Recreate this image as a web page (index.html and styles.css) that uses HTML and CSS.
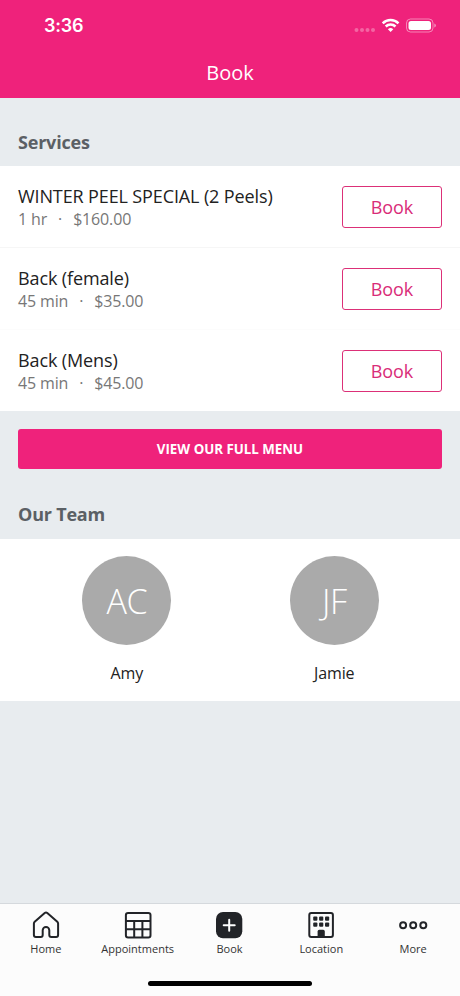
FILE: index.html
```html
<!DOCTYPE html>
<html lang="en">
<head>
<meta charset="utf-8">
<title>Book</title>
<link rel="stylesheet" href="styles.css">
</head>
<body>
<header class="header">
  <div class="status">
    <span class="time">3:36</span>
    <svg class="status-icons" width="84" height="18" viewBox="0 0 84 18">
      <g fill="#fff" opacity=".3"><circle cx="4.500" cy="13" r="2"/><circle cx="10" cy="13" r="2"/><circle cx="15.500" cy="13" r="2"/><circle cx="21" cy="13" r="2"/></g>
      <g fill="none" stroke="#fff" stroke-width="2.500"><path d="M30.700 6.300a11.200 11.200 0 0 1 15.800 0"/><path d="M33.700 9.500a7 7 0 0 1 9.800 0"/></g>
      <path d="M38.600 15l-2.700-2.800a3.900 3.900 0 0 1 5.400 0z" fill="#fff"/>
      <rect x="54.500" y="2" width="26.500" height="13" rx="4" fill="none" stroke="#fff" stroke-opacity=".45"/>
      <rect x="56.500" y="4" width="22.500" height="9" rx="2.500" fill="#fff"/>
      <path d="M82.300 6.500q1.600.5 1.600 2t-1.600 2z" fill="#fff" opacity=".5"/>
    </svg>
  </div>
  <h1 class="title">Book</h1>
</header>
<main class="content">
  <h2 class="section services-title">Services</h2>
  <ul class="services">
    <li class="service">
      <div><div class="name">WINTER PEEL SPECIAL (2 Peels)</div><div class="meta"><span>1 hr</span><span>·</span><span>$160.00</span></div></div>
      <button class="book">Book</button>
    </li>
    <li class="service">
      <div><div class="name">Back (female)</div><div class="meta"><span>45 min</span><span>·</span><span>$35.00</span></div></div>
      <button class="book">Book</button>
    </li>
    <li class="service">
      <div><div class="name">Back (Mens)</div><div class="meta"><span>45 min</span><span>·</span><span>$45.00</span></div></div>
      <button class="book">Book</button>
    </li>
  </ul>
  <button class="menu">VIEW OUR FULL MENU</button>
  <h2 class="section team-title">Our Team</h2>
  <div class="team">
    <div class="member"><div class="avatar">AC</div><div class="member-name">Amy</div></div>
    <div class="member"><div class="avatar">JF</div><div class="member-name">Jamie</div></div>
  </div>
</main>
<footer class="footer">
  <nav class="tabs">
    <a class="tab"><svg class="icon" viewBox="0 0 28 28"><path d="M1.900 12.600Q1.900 11.500 2.700 10.700L12.700 2.100Q14 1 15.300 2.100L25.300 10.700Q26.100 11.500 26.100 12.600V24Q26.100 26 24.100 26H19.300Q17.300 26 17.300 24V19.300A3.300 3.300 0 0 0 10.700 19.300V24Q10.700 26 8.700 26H3.900Q1.900 26 1.900 24Z"/></svg><span>Home</span></a>
    <a class="tab"><svg class="icon" viewBox="0 0 28 28"><rect x="1.900" y="1.900" width="24.600" height="24.600" rx="2.200"/><path d="M2 10H26.500M2 18.200H26.500M10.200 10V26.500M18.400 10V26.500"/></svg><span>Appointments</span></a>
    <a class="tab"><svg class="icon" viewBox="0 0 28 28"><rect class="solid" x="1" y="1" width="26.300" height="26.300" rx="7"/><path class="plus" d="M14.200 8.700V19.700M8.700 14.200H19.700"/></svg><span>Book</span></a>
    <a class="tab"><svg class="icon" viewBox="0 0 28 28"><rect x="2.300" y="1.900" width="23.600" height="24" rx="2"/><g class="solid"><rect x="6.200" y="5.600" width="4.200" height="4.200" rx="1"/><rect x="12.100" y="5.600" width="4.200" height="4.200" rx="1"/><rect x="18" y="5.600" width="4.200" height="4.200" rx="1"/><rect x="6.200" y="11.600" width="4.200" height="4.200" rx="1"/><rect x="12.100" y="11.600" width="4.200" height="4.200" rx="1"/><rect x="18" y="11.600" width="4.200" height="4.200" rx="1"/><path d="M10.600 26v-5.600q0-1.600 1.600-1.600h4q1.600 0 1.600 1.600V26z"/></g></svg><span>Location</span></a>
    <a class="tab"><svg class="icon dots" viewBox="0 0 28 28"><circle cx="4.100" cy="14.200" r="3"/><circle cx="14.200" cy="14.200" r="3"/><circle cx="24.300" cy="14.200" r="3"/></svg><span>More</span></a>
  </nav>
  <div class="home-bar"></div>
</footer>
</body>
</html>
```

FILE: styles.css
```css
* { box-sizing: border-box; }
body {
  margin: 0;
  height: 996px;
  display: flex;
  flex-direction: column;
  background: #e8ecef;
  color: #222;
  font-family: "Open Sans", sans-serif;
  overflow: hidden;
}
h1, h2, ul { margin: 0; padding: 0; list-style: none; }
button { font-family: inherit; padding: 0; }
.header { height: 98px; background: #ef227b; color: #fff; }
.status {
  height: 50px;
  padding: 0 24px 0 44px;
  display: flex;
  justify-content: space-between;
  align-items: center;
}
.time { font: 600 18px/22px Inter, sans-serif; letter-spacing: -.2px; padding-top: 2px; }
.status-icons { display: block; margin-top: 1px; overflow: visible; }
.title { font-size: 20px; line-height: 46px; font-weight: 400; text-align: center; }
.content { flex: 1; }
.section { color: #5b6065; font-size: 18px; line-height: 24px; font-weight: 700; letter-spacing: -.2px; padding-left: 18px; }
.services-title { padding-top: 32px; height: 68px; }
.services { background: #fff; }
.service {
  height: 82px;
  padding: 0 18px;
  display: flex;
  justify-content: space-between;
  align-items: center;
  border-bottom: 1px solid #f6f6f6;
}
.service:nth-child(2) { border-color: #fcfcfc; }
.service:last-child { height: 81px; border: 0; }
.name { font-size: 18px; line-height: 24px; letter-spacing: -.12px; }
.meta { display: flex; gap: 11px; color: #777; font-size: 16px; line-height: 22px; letter-spacing: -.15px; }
.book {
  width: 100px;
  height: 42px;
  border: 1px solid #dc3078;
  border-radius: 3px;
  background: #fff;
  color: #d92c78;
  font-size: 18px;
  letter-spacing: -.1px;
}
.menu {
  display: block;
  width: 424px;
  height: 40px;
  margin: 18px 18px 0;
  border: 0;
  border-radius: 3px;
  background: #ef227b;
  color: #fff;
  font-size: 13.300px;
  font-weight: 700;
}
.team-title { padding-top: 33px; height: 70px; }
.team { display: flex; height: 162px; padding: 17px 22px 0 23px; background: #fff; }
.member { flex: 1; display: flex; flex-direction: column; align-items: center; }
.avatar {
  width: 89px;
  height: 89px;
  border-radius: 50%;
  background: #aaa;
  color: #fff;
  font-size: 34px;
  line-height: 91px;
  font-weight: 300;
  letter-spacing: -.5px;
  text-align: center;
}
.member-name { margin-top: 17px; font-size: 16px; line-height: 22px; letter-spacing: -.1px; }
.footer { height: 93px; background: #fcfcfc; border-top: 1px solid #d5d9dd; }
.tabs { display: flex; height: 76px; padding: 7px 1px 0 0; }
.tab { flex: 1; display: flex; flex-direction: column; align-items: center; font-size: 11px; line-height: 16px; color: #333; }
.icon { width: 28px; height: 28px; margin-bottom: 2px; fill: none; stroke: #222428; stroke-width: 2; overflow: visible; }
.icon .solid { fill: #222428; stroke: none; }
.icon .plus { stroke: #fff; stroke-linecap: round; }
.dots { stroke-width: 2; }
.home-bar { width: 164px; height: 5px; margin: 1px auto 0; border-radius: 3px; background: #000; }
```
